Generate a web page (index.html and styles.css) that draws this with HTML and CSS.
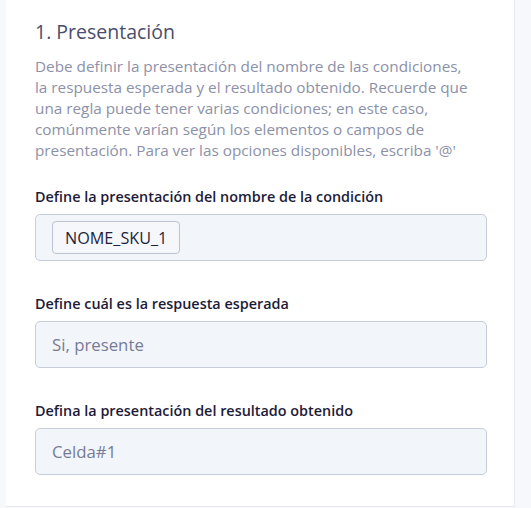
FILE: index.html
```html
<!DOCTYPE html>
<html lang="es">
<head>
<meta charset="utf-8">
<title>Presentación</title>
<link rel="stylesheet" href="styles.css">
</head>
<body>
<section class="card">
  <h2 class="title">1. Presentación</h2>
  <p class="desc">Debe definir la presentación del nombre de las condiciones, la respuesta esperada y el resultado obtenido. Recuerde que una regla puede tener varias condiciones; en este caso, comúnmente varían según los elementos o campos de presentación. Para ver las opciones disponibles, escriba '@'</p>
  <div class="field">
    <label class="label">Define la presentación del nombre de la condición</label>
    <div class="input"><span class="chip">NOME_SKU_1</span></div>
  </div>
  <div class="field">
    <label class="label">Define cuál es la respuesta esperada</label>
    <div class="input"><span class="placeholder">Si, presente</span></div>
  </div>
  <div class="field">
    <label class="label">Defina la presentación del resultado obtenido</label>
    <div class="input"><span class="placeholder">Celda#1</span></div>
  </div>
</section>
</body>
</html>
```
FILE: styles.css
```css
html, body {
  margin: 0;
  padding: 0;
}
body {
  background: #f7f8fb;
  font-family: "Open Sans", "Noto Sans", sans-serif;
  width: 531px;
  height: 508px;
  overflow: hidden;
}
.card {
  box-sizing: border-box;
  margin-left: 6px;
  width: 509px;
  background: #ffffff;
  border-right: 1px solid #e8eaef;
  border-bottom: 1px solid #e8eaef;
  padding: 18px 27px 31px 29px;
  display: flex;
  flex-direction: column;
}
.title {
  margin: 0;
  font-size: 19.5px;
  line-height: 28px;
  font-weight: 400;
  color: #4a4e6a;
}
.desc {
  margin: 10px 0 0;
  max-width: 440px;
  font-size: 15.3px;
  line-height: 21px;
  color: #8c91a8;
}
.field {
  display: flex;
  flex-direction: column;
  gap: 7px;
  margin-top: 33px;
}
.desc + .field {
  margin-top: 26px;
}
.label {
  font-size: 14.4px;
  line-height: 20px;
  font-weight: 600;
  color: #1d1b38;
}
.input {
  box-sizing: border-box;
  height: 47px;
  background: #f2f5fa;
  border: 1px solid #c7cdd9;
  border-radius: 5px;
  display: flex;
  align-items: center;
  padding: 0 16px;
}
.placeholder {
  font-size: 16.8px;
  color: #767c95;
}
.chip {
  box-sizing: border-box;
  height: 33px;
  display: inline-flex;
  align-items: center;
  padding: 0 12px;
  background: #f5f7fb;
  border: 1px solid #bcc3d1;
  border-radius: 4px;
  font-size: 16.2px;
  color: #1f1f3d;
}
```
